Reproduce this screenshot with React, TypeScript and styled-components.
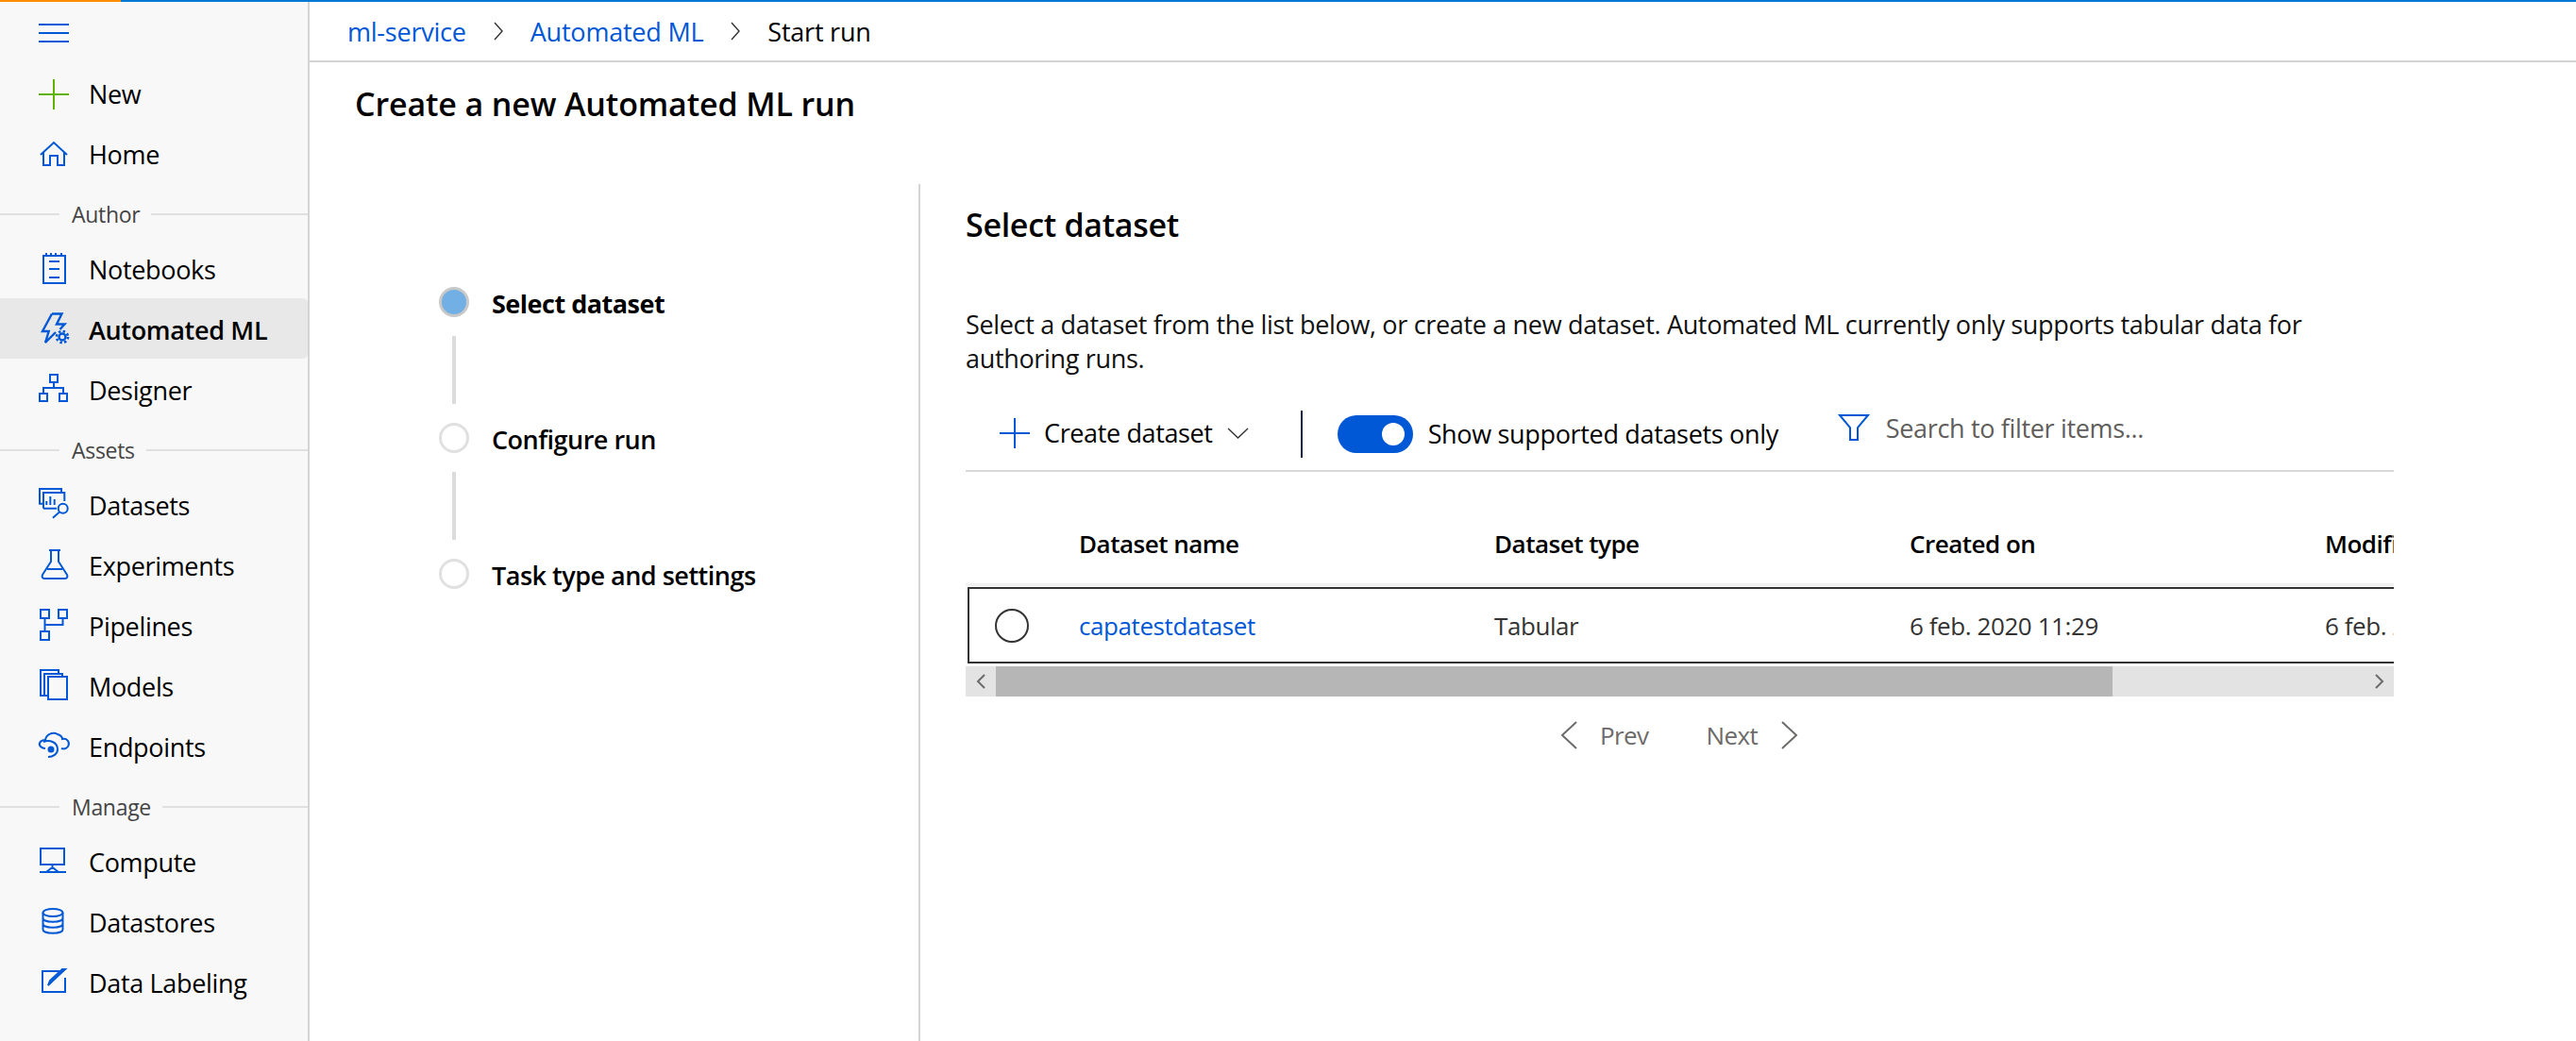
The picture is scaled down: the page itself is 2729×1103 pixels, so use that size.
import React from "react";
import styled, { createGlobalStyle } from "styled-components";

const FONT = `"Open Sans", "Noto Sans", "Liberation Sans", sans-serif`;
const BLUE = "#0058d6";

const Global = createGlobalStyle`
  html, body { margin: 0; padding: 0; background: #fff; overflow: hidden; }
  body { font-family: ${FONT}; color: #000; }
  * { box-sizing: border-box; }
`;

const Page = styled.div`
  width: 2729px;
  height: 1103px;
  display: flex;
  flex-direction: column;
  overflow: hidden;
`;
const Strip = styled.div`
  height: 2px;
  flex: none;
  background: linear-gradient(to right, #ff8c00 128px, #0078d4 128px);
`;
const Shell = styled.div`
  flex: 1;
  display: flex;
  min-height: 0;
`;
const Sidebar = styled.nav`
  width: 328px;
  flex: none;
  background: #f8f8f8;
  border-right: 2px solid #d4d4d4;
`;
const MenuRow = styled.div`
  height: 66px;
  padding-left: 41px;
  display: flex;
  align-items: center;
`;
const NavRow = styled.div<{ $active?: boolean }>`
  position: relative;
  height: 64px;
  padding: 0 0 1px 41px;
  display: flex;
  align-items: center;
  gap: 21px;
  font-size: 27px;
  letter-spacing: -0.33px;
  font-weight: ${(p) => (p.$active ? 600 : 400)};
  color: #000;
  &::before {
    content: "";
    display: ${(p) => (p.$active ? "block" : "none")};
    position: absolute;
    inset: -2px 0 2px 0;
    background: #e8e8e8;
    border-radius: 0 5px 5px 0;
  }
  > * { position: relative; }
`;
const SectionLabel = styled.div`
  height: 58px;
  padding-top: 4px;
  display: flex;
  align-items: center;
  font-size: 23px;
  letter-spacing: -0.3px;
  color: #444;
  &::before, &::after {
    content: "";
    height: 2px;
    background: #e0e0e0;
  }
  &::before { width: 63px; margin-right: 13px; flex: none; }
  &::after { flex: 1; margin-left: 12px; }
`;
const Svg = styled.svg<{ $w?: number; $h?: number }>`
  width: ${(p) => p.$w ?? 32}px;
  height: ${(p) => p.$h ?? 32}px;
  flex: none;
  overflow: visible;
  fill: none;
  stroke: ${BLUE};
  stroke-width: 2;
`;
const GreySvg = styled(Svg)`
  stroke: #6d6b69;
`;
const Main = styled.main`
  flex: 1;
  min-width: 0;
  display: flex;
  flex-direction: column;
`;
const Breadcrumb = styled.div`
  height: 64px;
  flex: none;
  border-bottom: 2px solid #d4d4d4;
  padding: 0 0 0 40px;
  display: flex;
  align-items: center;
  font-size: 27px;
  letter-spacing: -0.22px;
`;
const Crumb = styled.span<{ $link?: boolean }>`
  color: ${(p) => (p.$link ? BLUE : "#000")};
`;
const CrumbGap = styled.span`
  margin: 0 29px;
  display: flex;
`;
const Title = styled.h1`
  margin: 0;
  height: 129px;
  flex: none;
  padding: 20px 0 0 48px;
  font-size: 34px;
  line-height: 48px;
  font-weight: 600;
  letter-spacing: -0.13px;
`;
const Body = styled.div`
  flex: 1;
  min-height: 0;
  display: flex;
`;
const StepperColumn = styled.div`
  width: 645px;
  flex: none;
  padding: 109px 0 0 137px;
`;
const Step = styled.div<{ $active?: boolean }>`
  display: flex;
  align-items: center;
  gap: 24px;
  height: 32px;
  font-size: 27px;
  line-height: 34px;
  letter-spacing: -0.5px;
  font-weight: ${(p) => (p.$active ? 700 : 600)};
`;
const StepLabel = styled.span`
  padding-top: 3px;
`;
const StepDot = styled.span<{ $active?: boolean }>`
  width: 32px;
  height: 32px;
  flex: none;
  border-radius: 50%;
  border: 3px solid ${(p) => (p.$active ? "#c8c8c8" : "#e0e0e0")};
  background: ${(p) => (p.$active ? "#71afe5" : "#fff")};
`;
const Connector = styled.div`
  width: 4px;
  height: 72px;
  margin: 20px 0 20px 14px;
  background: #dcdcdc;
`;
const Panel = styled.section`
  width: 1563px;
  flex: none;
  border-left: 2px solid #d4d4d4;
  padding: 0 0 0 48px;
`;
const PanelInner = styled.div`
  width: 1513px;
`;
const PanelTitle = styled.h2`
  margin: 0;
  padding-top: 21px;
  height: 131px;
  font-size: 34px;
  line-height: 44px;
  font-weight: 600;
  letter-spacing: -0.3px;
`;
const Description = styled.p`
  margin: 0;
  height: 102px;
  font-size: 27px;
  line-height: 36px;
  letter-spacing: -0.33px;
  color: #111;
`;
const Toolbar = styled.div`
  height: 72px;
  border-bottom: 2px solid #d8d8d8;
  padding: 0 0 6px 36px;
  display: flex;
  align-items: center;
`;
const CreateButton = styled.div`
  display: flex;
  align-items: center;
  margin-top: -3px;
  font-size: 27px;
  letter-spacing: -0.37px;
  gap: 15px;
`;
const ToolbarDivider = styled.span`
  width: 2px;
  height: 50px;
  background: #16213e;
  margin: 0 37px 0 55px;
  flex: none;
`;
const Switch = styled.span`
  width: 80px;
  height: 40px;
  flex: none;
  border-radius: 20px;
  background: ${BLUE};
  display: flex;
  align-items: center;
  justify-content: flex-end;
  padding-right: 9px;
  &::after {
    content: "";
    width: 24px;
    height: 24px;
    border-radius: 50%;
    background: #fff;
  }
`;
const SwitchLabel = styled.span`
  margin: -2px 0 0 16px;
  font-size: 27px;
  letter-spacing: -0.33px;
  white-space: nowrap;
`;
const Search = styled.div`
  margin: -14px 0 0 64px;
  display: flex;
  align-items: center;
  gap: 18px;
  font-size: 27px;
  letter-spacing: -0.34px;
  color: #605e5c;
`;
const TableFrame = styled.div`
  width: 1513px;
  overflow: hidden;
`;
const GridRow = styled.div`
  display: grid;
  grid-template-columns: 120px 440px 440px 440px 440px;
  align-items: center;
  width: 1880px;
  white-space: nowrap;
`;
const HeaderRow = styled(GridRow)`
  height: 121px;
  padding-top: 33px;
  border-bottom: 3px solid #f0f0f0;
  font-size: 26px;
  font-weight: 600;
  letter-spacing: -0.5px;
`;
const DataRow = styled(GridRow)`
  height: 81px;
  margin: 1px 0 0 2px;
  border: 2px solid #333;
  border-right: none;
  font-size: 26px;
  letter-spacing: -0.42px;
  color: #333;
  grid-template-columns: 116px 440px 440px 440px 440px;
`;
const Radio = styled.span`
  width: 36px;
  height: 36px;
  margin-left: 27px;
  border-radius: 50%;
  border: 2px solid #333;
`;
const RowLink = styled.span`
  color: ${BLUE};
`;
const Scrollbar = styled.div`
  margin-top: 3px;
  height: 32px;
  display: flex;
  align-items: center;
  background: #e3e3e3;
`;
const ScrollArrow = styled.span`
  width: 32px;
  flex: none;
  display: flex;
  justify-content: center;
`;
const ScrollThumb = styled.span`
  width: 1183px;
  height: 32px;
  flex: none;
  background: #b6b6b6;
`;
const ScrollSpace = styled.span`
  flex: 1;
`;
const Pager = styled.div`
  margin: 26px 0 0 631px;
  display: flex;
  align-items: center;
  height: 30px;
  font-size: 26px;
  letter-spacing: -0.6px;
  color: #6d6b69;
`;
const PagerLabel = styled.span<{ $gap: number }>`
  margin: 0 ${(p) => p.$gap}px 0 24px;
`;
const PagerNext = styled.span`
  margin: 0 25px 0 0;
`;

const Icons: Record<string, React.ReactNode> = {
  home: <path d="M2 16L16 3L30 16M5 13V27H12V17H20V27H27V13" />,
  notebook: (
    <>
      <rect x="5" y="1" width="23" height="29" />
      <path d="M8 -2V1M13 -2V1M18 -2V1M24 -2V1M11 7H22M11 15H22M11 24H22" />
    </>
  ),
  automl: (
    <>
      <path strokeWidth="2.4" d="M14 -1.500H24.500L19 9.500H27.500L22.500 15M14 -1.500L4 17H10.700L7 29L18 18" />
      <circle cx="25" cy="23" r="3.5" strokeWidth="2.4" />
      <circle cx="25" cy="23" r="6" strokeWidth="2.6" strokeDasharray="2.4 2.3" />
    </>
  ),
  designer: (
    <>
      <rect x="12" y="-1" width="8" height="8" />
      <rect x="1" y="19" width="8" height="8" />
      <rect x="22" y="19" width="8" height="8" />
      <path d="M16 7V13M5 19V13H26V19" />
    </>
  ),
  datasets: (
    <>
      <path d="M5 13.700H1V-2H24V2" />
      <path d="M5 18.700V2H27.300V11M5 18.700H19" />
      <path d="M8.300 15V11M12.300 15V6M16.700 15V9" />
      <circle cx="25.700" cy="18.700" r="5" />
      <path d="M22 22.500L15 28.700" />
    </>
  ),
  flask: <path d="M11 -1H23M13 -1V11L4 25C3 27 4 29 6 29H28C30 29 31 27 30 25L21 11V-1M9 19H25" />,
  pipelines: (
    <>
      <rect x="2" y="-2" width="9" height="9" />
      <rect x="21" y="-2" width="9" height="9" />
      <rect x="2" y="21" width="9" height="9" />
      <path d="M6.5 7V21M6.5 14H25.5V7" />
    </>
  ),
  models: (
    <>
      <rect x="10" y="5" width="20" height="24" />
      <path d="M6 25V2H25V5" />
      <path d="M10 25H2V-2H21V2" />
    </>
  ),
  endpoints: (
    <>
      <path d="M7 8C8 2 15 -1 20 2C23 3 25 5 25 7C30 6 33 10 31.500 14C30.500 17 27 18 24 17M7 8C2 8 -1 12 2 15C3 16 5 17 7 17M5 10C12 7 20 11 20 18C20 23 15 26 10 26" />
      <circle cx="13" cy="18" r="2.5" fill={BLUE} />
    </>
  ),
  compute: (
    <>
      <rect x="2" y="1" width="25" height="17" />
      <path d="M14.500 18V21M1 26H29M8 26L14.500 21L21 26" />
    </>
  ),
  datastores: (
    <>
      <ellipse cx="15" cy="5" rx="10.500" ry="4" />
      <path d="M4.500 5V23C4.500 28 25.500 28 25.500 23V5M4.500 11C4.500 16 25.500 16 25.500 11M4.500 17C4.500 22 25.500 22 25.500 17" />
    </>
  ),
  labeling: (
    <>
      <path d="M28 10V25H4V3H22" />
      <path d="M28 1L14 14L10 18L12 13L25 1Z" />
    </>
  ),
};

function NavIcon({ name }: { name: string }) {
  return <Svg viewBox="0 0 32 32">{Icons[name]}</Svg>;
}

const Chevron = ({ dir, w, h, grey }: { dir: "l" | "r" | "d"; w: number; h: number; grey?: boolean }) => {
  const d = dir === "l" ? `M${w - 1} 1L1 ${h / 2}L${w - 1} ${h - 1}` : dir === "r" ? `M1 1L${w - 1} ${h / 2}L1 ${h - 1}` : `M1 1L${w / 2} ${h - 1}L${w - 1} 1`;
  const C = grey ? GreySvg : Svg;
  return (
    <C $w={w} $h={h} viewBox={`0 0 ${w} ${h}`}>
      <path d={d} />
    </C>
  );
};

const DarkChevron = styled(Svg)`
  stroke: #333;
  stroke-width: 1.4;
`;

const first = [
  ["notebook", "Notebooks"],
  ["automl", "Automated ML", true],
  ["designer", "Designer"],
] as const;
const second = [
  ["datasets", "Datasets"],
  ["flask", "Experiments"],
  ["pipelines", "Pipelines"],
  ["models", "Models"],
  ["endpoints", "Endpoints"],
] as const;
const third = [
  ["compute", "Compute"],
  ["datastores", "Datastores"],
  ["labeling", "Data Labeling"],
] as const;

export default function App() {
  const renderRows = (rows: readonly (readonly [string, string, boolean?])[]) =>
    rows.map(([icon, label, active]) => (
      <NavRow key={label} $active={active}>
        <NavIcon name={icon} />
        <span>{label}</span>
      </NavRow>
    ));
  return (
    <Page>
      <Global />
      <Strip />
      <Shell>
        <Sidebar>
          <MenuRow>
            <Svg viewBox="0 0 32 32">
              <path d="M0 7H32M0 16H32M0 25H32" />
            </Svg>
          </MenuRow>
          <NavRow>
            <Svg viewBox="0 0 32 32">
              <path d="M0 16H32M16 0V32" stroke="#5db300" />
            </Svg>
            <span>New</span>
          </NavRow>
          <NavRow>
            <NavIcon name="home" />
            <span>Home</span>
          </NavRow>
          <SectionLabel>Author</SectionLabel>
          {renderRows(first)}
          <SectionLabel>Assets</SectionLabel>
          {renderRows(second)}
          <SectionLabel>Manage</SectionLabel>
          {renderRows(third)}
        </Sidebar>
        <Main>
          <Breadcrumb>
            <Crumb $link>ml-service</Crumb>
            <CrumbGap>
              <DarkChevron $w={10} $h={20} viewBox="0 0 10 20">
                <path d="M1 1L9 10L1 19" />
              </DarkChevron>
            </CrumbGap>
            <Crumb $link>Automated ML</Crumb>
            <CrumbGap>
              <DarkChevron $w={10} $h={20} viewBox="0 0 10 20">
                <path d="M1 1L9 10L1 19" />
              </DarkChevron>
            </CrumbGap>
            <Crumb>Start run</Crumb>
          </Breadcrumb>
          <Title>Create a new Automated ML run</Title>
          <Body>
            <StepperColumn>
              <Step $active>
                <StepDot $active />
                <StepLabel>Select dataset</StepLabel>
              </Step>
              <Connector />
              <Step>
                <StepDot />
                <StepLabel>Configure run</StepLabel>
              </Step>
              <Connector />
              <Step>
                <StepDot />
                <StepLabel>Task type and settings</StepLabel>
              </Step>
            </StepperColumn>
            <Panel>
              <PanelInner>
                <PanelTitle>Select dataset</PanelTitle>
                <Description>
                  Select a dataset from the list below, or create a new dataset. Automated ML currently only supports tabular data for
                  <br />
                  authoring runs.
                </Description>
                <Toolbar>
                  <CreateButton>
                    <Svg viewBox="0 0 32 32">
                      <path d="M0 16H32M16 0V32" />
                    </Svg>
                    <span>Create dataset</span>
                    <DarkChevron $w={23} $h={12} viewBox="0 0 23 12">
                      <path d="M1 1L11.500 11L22 1" />
                    </DarkChevron>
                  </CreateButton>
                  <ToolbarDivider />
                  <Switch />
                  <SwitchLabel>Show supported datasets only</SwitchLabel>
                  <Search>
                    <Svg viewBox="0 0 32 28">
                      <path d="M1 1H31L20 14V27H12V14Z" />
                    </Svg>
                    <span>Search to filter items...</span>
                  </Search>
                </Toolbar>
                <TableFrame>
                  <HeaderRow>
                    <span />
                    <span>Dataset name</span>
                    <span>Dataset type</span>
                    <span>Created on</span>
                    <span>Modified on</span>
                  </HeaderRow>
                  <DataRow>
                    <Radio />
                    <RowLink>capatestdataset</RowLink>
                    <span>Tabular</span>
                    <span>6 feb. 2020 11:29</span>
                    <span>6 feb. 2020 11:29</span>
                  </DataRow>
                </TableFrame>
                <Scrollbar>
                  <ScrollArrow>
                    <Chevron dir="l" w={9} h={16} grey />
                  </ScrollArrow>
                  <ScrollThumb />
                  <ScrollSpace />
                  <ScrollArrow>
                    <Chevron dir="r" w={9} h={16} grey />
                  </ScrollArrow>
                </Scrollbar>
                <Pager>
                  <Chevron dir="l" w={17} h={30} grey />
                  <PagerLabel $gap={61}>Prev</PagerLabel>
                  <PagerNext>Next</PagerNext>
                  <Chevron dir="r" w={17} h={30} grey />
                </Pager>
              </PanelInner>
            </Panel>
          </Body>
        </Main>
      </Shell>
    </Page>
  );
}
